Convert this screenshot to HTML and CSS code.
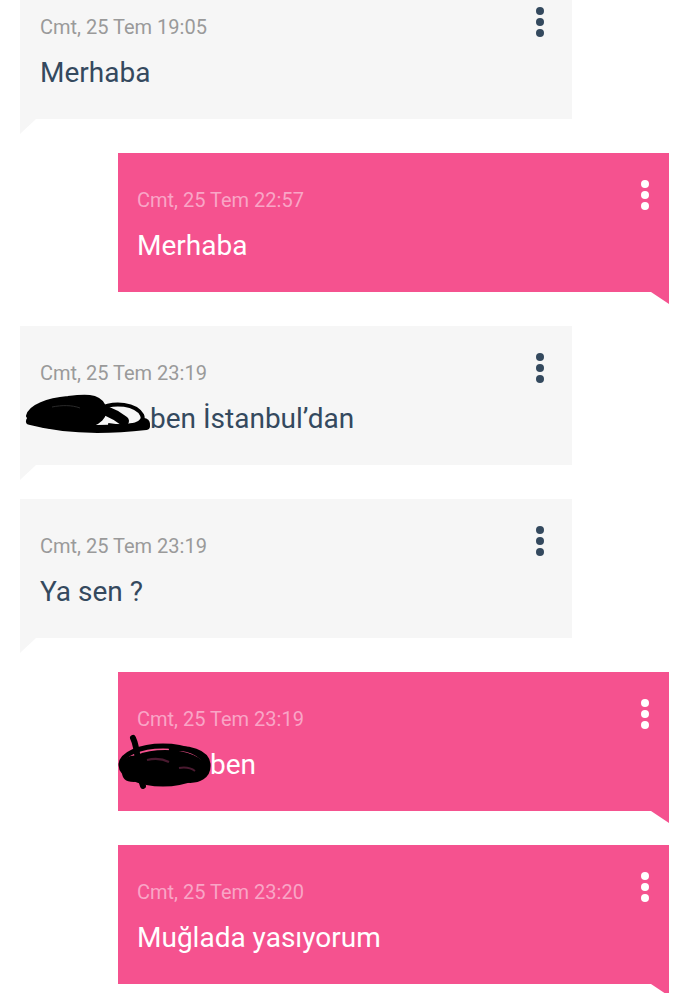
FILE: index.html
```html
<!DOCTYPE html>
<html lang="tr">
<head>
<meta charset="utf-8">
<title>Mesajlar</title>
<link rel="stylesheet" href="styles.css">
</head>
<body>
<div class="chat">
  <div class="msg in first">
    <div class="body">
      <div class="time">Cmt, 25 Tem 19:05</div>
      <div class="text">Merhaba</div>
    </div>
    <svg class="dots" viewBox="0 0 8 30"><circle cx="4" cy="4" r="4"/><circle cx="4" cy="15" r="4"/><circle cx="4" cy="26" r="4"/></svg>
  </div>

  <div class="msg out">
    <div class="body">
      <div class="time">Cmt, 25 Tem 22:57</div>
      <div class="text">Merhaba</div>
    </div>
    <svg class="dots" viewBox="0 0 8 30"><circle cx="4" cy="4" r="4"/><circle cx="4" cy="15" r="4"/><circle cx="4" cy="26" r="4"/></svg>
  </div>

  <div class="msg in">
    <div class="body">
      <div class="time">Cmt, 25 Tem 23:19</div>
      <div class="text"><span class="redact redact-a"><svg class="scribble scribble-a" viewBox="0 0 140 60">
        <path d="M8 31 C10 21 28 15 48 13 C64 11 78 10 83 20 C88 30 80 40 60 42 C40 44 14 42 8 31 Z" fill="#000" stroke="#000" stroke-width="4" stroke-linejoin="round"/>
        <path d="M10 36 C40 44 82 46 126 41" stroke="#000" stroke-width="8" fill="none" stroke-linecap="round"/>
        <path d="M78 24 C95 16 116 19 122 30 C126 38 112 44 88 40" stroke="#000" stroke-width="4" fill="none"/>
        <path d="M60 24 C76 20 92 27 104 36" stroke="#000" stroke-width="10" fill="none" stroke-linecap="round"/>
        <circle cx="124" cy="39" r="6" fill="#000"/>
        <path d="M32 22 C42 20 52 20 60 23" stroke="#2a2a2a" stroke-width="1" fill="none"/>
      </svg></span>ben İstanbul’dan</div>
    </div>
    <svg class="dots" viewBox="0 0 8 30"><circle cx="4" cy="4" r="4"/><circle cx="4" cy="15" r="4"/><circle cx="4" cy="26" r="4"/></svg>
  </div>

  <div class="msg in">
    <div class="body">
      <div class="time">Cmt, 25 Tem 23:19</div>
      <div class="text">Ya sen ?</div>
    </div>
    <svg class="dots" viewBox="0 0 8 30"><circle cx="4" cy="4" r="4"/><circle cx="4" cy="15" r="4"/><circle cx="4" cy="26" r="4"/></svg>
  </div>

  <div class="msg out">
    <div class="body">
      <div class="time">Cmt, 25 Tem 23:19</div>
      <div class="text"><span class="redact redact-b"><svg class="scribble scribble-b" viewBox="0 0 110 65">
        <ellipse cx="56" cy="37" rx="40" ry="17" fill="#000"/>
        <ellipse cx="54" cy="35" rx="42" ry="19" stroke="#000" stroke-width="5" fill="none"/>
        <path d="M24 8 C30 20 28 40 34 56" stroke="#000" stroke-width="6" fill="none" stroke-linecap="round"/>
        <path d="M13 42 C11 30 19 24 30 26 C42 28 38 50 25 52 C16 52 13 48 13 42 Z" fill="#000"/>
        <path d="M60 20 C80 16 98 22 99 34 C100 46 90 52 76 50" stroke="#000" stroke-width="5" fill="none"/>
        <path d="M38 30 C46 28 54 29 60 32" stroke="#4a1a30" stroke-width="2" fill="none"/>
        <path d="M70 38 C76 37 82 38 86 41" stroke="#4a1a30" stroke-width="2" fill="none"/>
      </svg></span>ben</div>
    </div>
    <svg class="dots" viewBox="0 0 8 30"><circle cx="4" cy="4" r="4"/><circle cx="4" cy="15" r="4"/><circle cx="4" cy="26" r="4"/></svg>
  </div>

  <div class="msg out">
    <div class="body">
      <div class="time">Cmt, 25 Tem 23:20</div>
      <div class="text">Muğlada yasıyorum</div>
    </div>
    <svg class="dots" viewBox="0 0 8 30"><circle cx="4" cy="4" r="4"/><circle cx="4" cy="15" r="4"/><circle cx="4" cy="26" r="4"/></svg>
  </div>
</div>
</body>
</html>
```

FILE: styles.css
```css
html, body {
  margin: 0;
  padding: 0;
  background: #ffffff;
  font-family: Roboto, "Noto Sans", "Liberation Sans", sans-serif;
  overflow: hidden;
}

.chat {
  display: flex;
  flex-direction: column;
}

.msg {
  position: relative;
  display: flex;
  height: 139px;
  margin-bottom: 34px;
  box-sizing: border-box;
}

.msg.first {
  margin-top: -20px;
}

.msg.in {
  background: #f6f6f6;
  margin-left: 20px;
  width: 552px;
}

.msg.out {
  background: #f5528f;
  margin-left: 118px;
  width: 551px;
}

.msg::after {
  content: "";
  position: absolute;
  top: 100%;
}

.msg.in::after {
  left: 0;
  width: 16px;
  height: 15px;
  background: #f6f6f6;
  clip-path: polygon(0 0, 100% 0, 0 100%);
}

.msg.out::after {
  right: 0;
  width: 18px;
  height: 12px;
  background: #f5528f;
  clip-path: polygon(0 0, 100% 0, 100% 100%);
}

.body {
  flex: 1;
  padding: 35px 0 0 20px;
}

.msg.out .body {
  padding-left: 19px;
}

.time {
  font-size: 20px;
  line-height: 24px;
  color: #9a9a9a;
}

.msg.out .time {
  color: #f9a5c6;
}

.text {
  font-size: 28px;
  line-height: 34px;
  margin-top: 17px;
  color: #34495e;
  white-space: nowrap;
}

.msg.out .text {
  color: #ffffff;
}

.dots {
  width: 8px;
  height: 30px;
  margin-top: 27px;
  fill: #34495e;
  flex: none;
}

.msg.in .dots {
  margin-right: 28px;
}

.msg.out .dots {
  margin-right: 20px;
  fill: #ffffff;
}

.redact {
  position: relative;
  display: inline-block;
  height: 34px;
  vertical-align: top;
}

.redact-a {
  width: 110px;
}

.redact-b {
  width: 73px;
}

.scribble {
  position: absolute;
}

.scribble-a {
  width: 140px;
  height: 60px;
  left: -20px;
  top: -17px;
}

.scribble-b {
  width: 110px;
  height: 65px;
  left: -28px;
  top: -18px;
}
```
